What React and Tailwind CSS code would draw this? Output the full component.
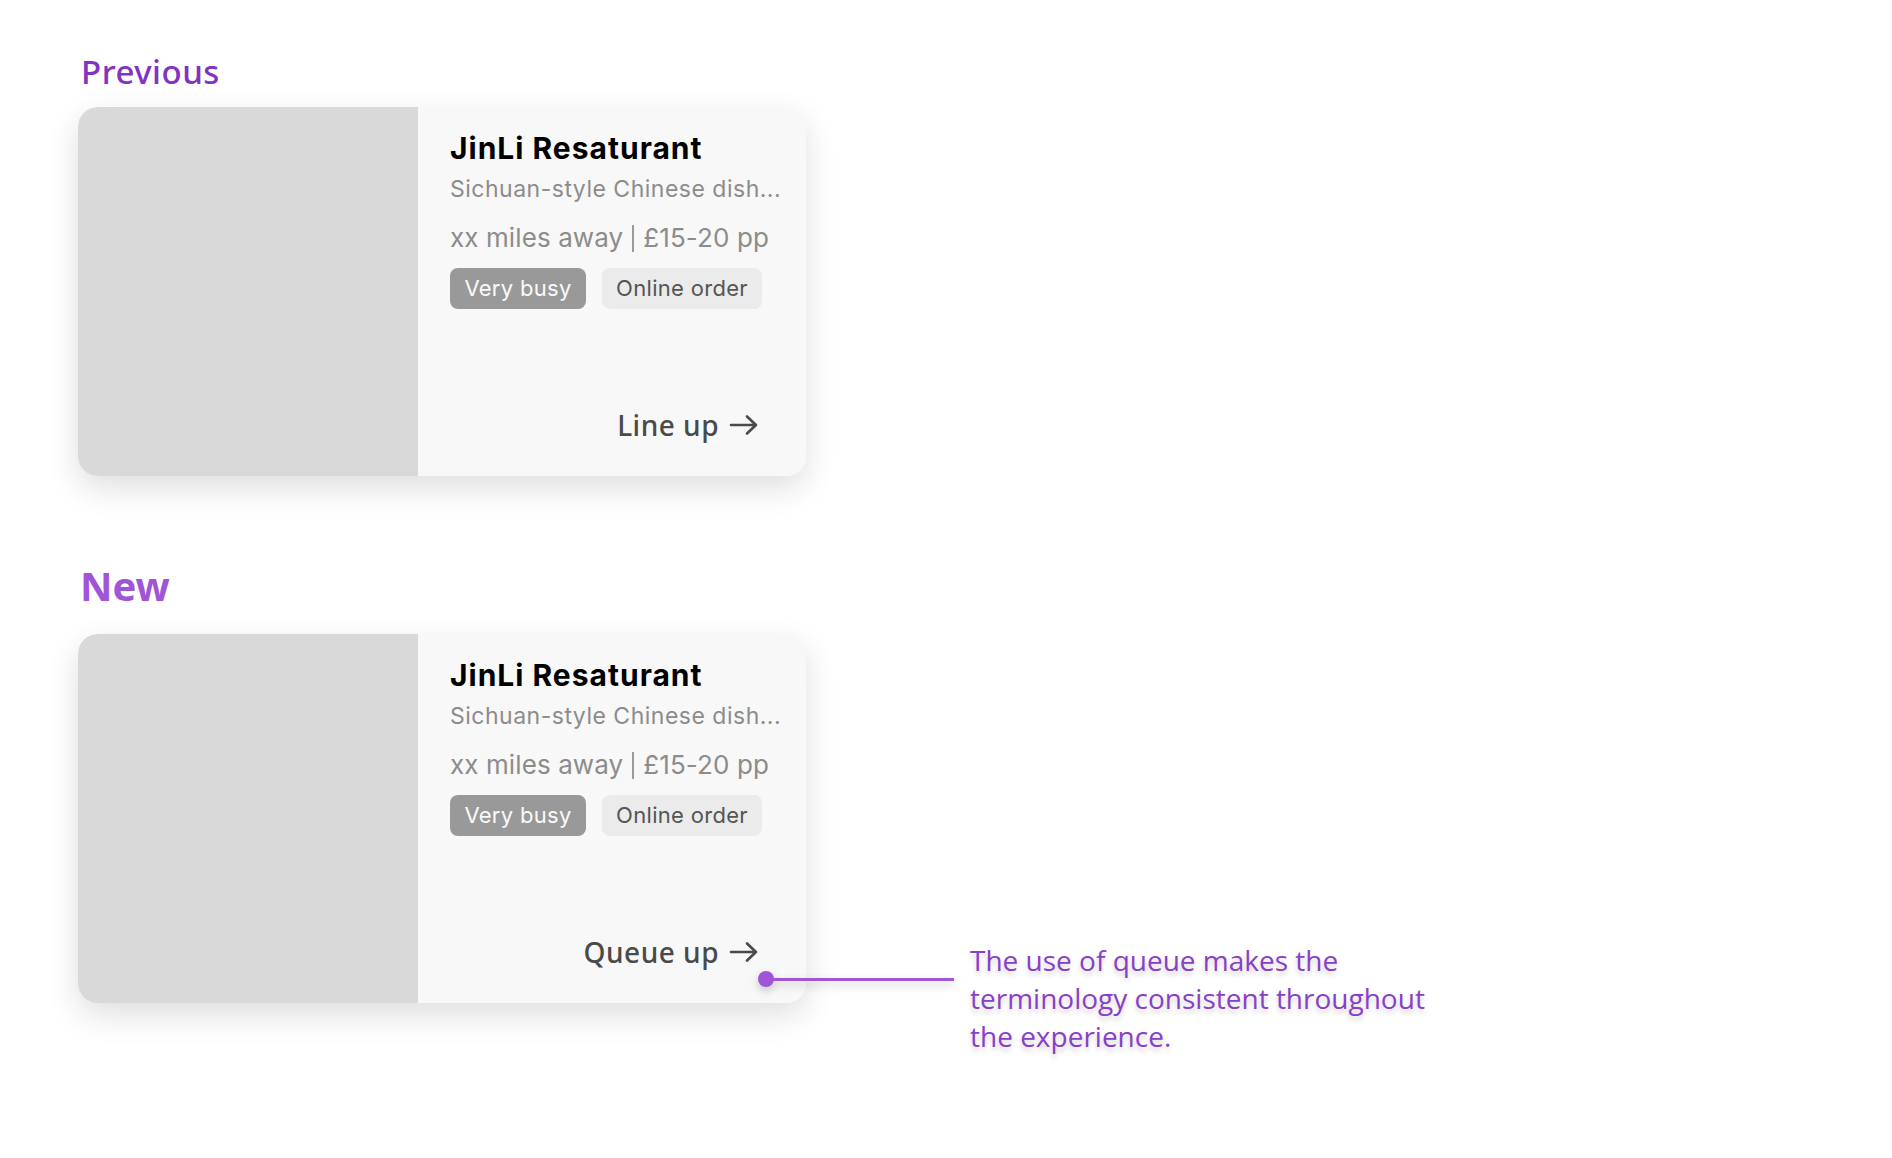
import React from 'react';

function Arrow() {
    return (
        <svg width="30" height="22" viewBox="0 0 30 22" fill="none" className="shrink-0">
            <path d="M2 11H27M18 2.5L27 11L18 19.5" stroke="#4a4a4a" strokeWidth="2.6" strokeLinecap="round" strokeLinejoin="round" />
        </svg>
    );
}

function Card({ cta, children }) {
    return (
        <div className="relative flex w-[728px] h-[369px] rounded-[20px] shadow-[0_12px_32px_rgba(0,0,0,0.13)]">
            <div className="w-[340px] flex-none bg-[#d9d9d9] rounded-l-[20px]" />
            <div className="flex-1 min-w-0 flex flex-col bg-[#f8f8f8] rounded-r-[20px] pl-[32px] pr-[40px] pt-[23px] pb-[34px] font-['Inter',sans-serif]">
                <h3 className="text-[30px] leading-[36px] font-bold text-black tracking-[1px] whitespace-nowrap">JinLi Resaturant</h3>
                <p className="mt-[8px] text-[23px] leading-[30px] text-[#8c8c8c] tracking-[0.5px] whitespace-nowrap">Sichuan-style Chinese dish...</p>
                <p className="mt-[18px] flex items-center text-[26px] leading-[32px] text-[#8c8c8c] tracking-[0.1px] whitespace-nowrap">
                    <span>xx miles away</span>
                    <span className="flex-none mx-[9px] w-[2px] h-[27px] bg-[#9a9a9a]" />
                    <span>£15-20 pp</span>
                </p>
                <div className="mt-[14px] flex gap-[16px]">
                    <span className="w-[136px] h-[41px] flex-none flex items-center justify-center rounded-[8px] bg-[#999999] text-[22px] tracking-[0.3px] text-[#fafafa] whitespace-nowrap">Very busy</span>
                    <span className="w-[160px] h-[41px] flex-none flex items-center justify-center rounded-[8px] bg-[#ebebeb] text-[22px] tracking-[0.3px] text-[#555555] whitespace-nowrap">Online order</span>
                </div>
                <div className="mt-auto pr-[7px] flex items-center justify-end gap-[10px] font-['Noto_Sans',sans-serif] text-[28px] leading-[34px] font-medium tracking-[0.5px] text-[#4a4a4a] whitespace-nowrap">
                    {cta}
                    <Arrow />
                </div>
            </div>
            {children}
        </div>
    );
}

export default function App() {
    return (
        <div className="min-h-screen bg-white pl-[78px] pt-[50px]">
            <h2 className="pl-[3px] font-['Noto_Sans',sans-serif] text-[33px] leading-[44px] font-medium tracking-[0.5px] text-[#8233c4]">Previous</h2>
            <div className="mt-[13px]">
                <Card cta="Line up" />
            </div>

            <h2 className="mt-[84px] pl-[2px] font-['Noto_Sans',sans-serif] text-[40px] leading-[52px] font-bold text-[#a055d6]">New</h2>
            <div className="mt-[22px]">
                <Card cta="Queue up">
                    {/* annotation callout */}
                    <div className="absolute left-[680px] top-[337px] flex items-center drop-shadow-[0_4px_4px_rgba(0,0,0,0.2)]">
                        <span className="w-[16px] h-[16px] rounded-full bg-[#a055d6]" />
                        <span className="w-[182px] h-[3px] bg-[#a055d6] -ml-[2px]" />
                    </div>
                    <p className="absolute left-[892px] top-[307px] w-[470px] font-['Open_Sans',sans-serif] text-[28px] leading-[38px] text-[#8a3fc9] [text-shadow:0_4px_5px_rgba(0,0,0,0.18)]">
                        The use of queue makes the terminology consistent throughout the experience.
                    </p>
                </Card>
            </div>
        </div>
    );
}
